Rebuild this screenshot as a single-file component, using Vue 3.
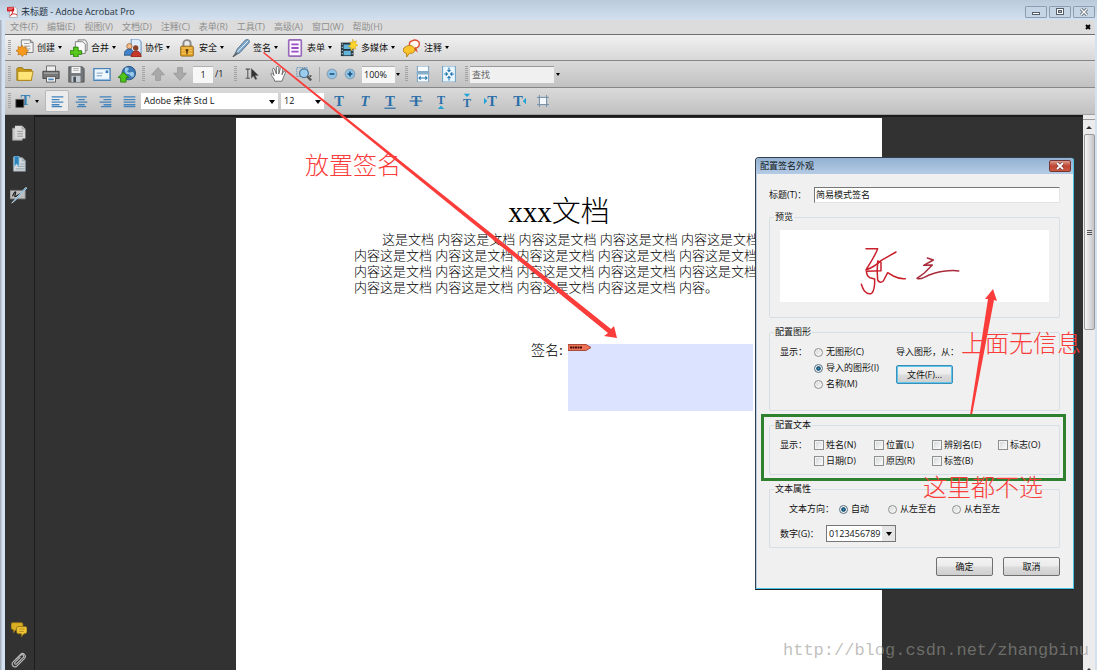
<script setup>
import { h, ref } from 'vue'

const art = {
  pdf: '<path d="M4 1h9l4 4v14H4z" fill="#fff" stroke="#888"/><path d="M0 2h12v7H0z" fill="#d11a22"/><path d="M5 17c4-2 5-8 4-11M6 15c4-3 8-2 11 0" fill="none" stroke="#c22" stroke-width="1.6"/><path d="M2 4h8M2 6h6" stroke="#f6b4b4"/>',
  create: '<path d="M6 1h10l3 3v11H6z" fill="#f4f4f4" stroke="#777"/><path d="M16 1v3h3" fill="#bbb" stroke="#777"/><path d="M9 5h6M9 8h7M9 11h7" stroke="#999"/><path d="M7 7l1.500 2.600L11.400 8.600l-.4 3L14 13l-2.600 1.600 .6 3-3-.6L7 19.500l-1.800-2.500-3 .6.6-3L0 13l2.800-1.500-.6-3 3 .8z" fill="#f59a1c" stroke="#b86608" stroke-width=".7"/>',
  merge: '<path d="M9 1h8l2 3v9H9z" fill="#eee" stroke="#777"/><path d="M6 3h8l3 3v10H6z" fill="#fafafa" stroke="#777"/><path d="M4 9h5v4h4v4H9v3H4v-3H0v-4h4z" fill="#58c91b" stroke="#277f0b"/>',
  collab: '<path d="M8 0h8l3 3v14H8z" fill="#dcecfb" stroke="#5685b5"/><circle cx="6" cy="8" r="3" fill="#f3bd8b" stroke="#864b20" stroke-width=".7"/><path d="M0 18c0-9 11-9 12 0z" fill="#4381c8" stroke="#265280"/><circle cx="13" cy="10" r="3" fill="#8b4328"/><path d="M8 20c0-9 11-9 11 0z" fill="#c73928" stroke="#812018"/>',
  lock: '<path d="M6 9V5c0-5 8-5 8 0v4" fill="none" stroke="#8a8a8a" stroke-width="2.200"/><rect x="3" y="8" width="14" height="11" rx="1" fill="#e4a52c" stroke="#8e5d0d"/><path d="M4 10h12M4 13h12M4 16h12" stroke="#f7cd6c"/><circle cx="10" cy="12.500" r="1.500" fill="#5a3800"/><path d="M10 13v4" stroke="#5a3800" stroke-width="1.500"/>',
  pen: '<path d="M2 19L6 11 15 1c3-1 5 0 4 3L9 15z" fill="#7fa9cc" stroke="#4d6b86"/><path d="M3 18l6-7L18 2" stroke="#e8f4fc" fill="none"/><path d="M1 20l5-5" stroke="#555" stroke-width="1.200"/>',
  form: '<rect x="3" y="1" width="14" height="18" rx="1" fill="#fbf6ff" stroke="#9a68b8" stroke-width="1.800"/><path d="M6 6h8M6 10h8M6 14h8" stroke="#9b51c2" stroke-width="2"/>',
  media: '<path d="M1 4h14v15H1z" fill="#26343e"/><path d="M4 6h8v5H4zM4 13h8v5H4z" fill="#63b5dc"/><path d="M2.500 5v14M13.500 5v14" stroke="#d9e7ed" stroke-dasharray="1.500 2"/><path d="M14 0l1.300 3 3-1-1 3L20 7l-3 1.400.8 3-3-1L12 13v-3.500L9 8l3-1.600L11 3l3 1z" fill="#ffd42d" stroke="#c99c09" stroke-width=".5"/>',
  comment: '<path d="M10 2c4-2 9 0 8 4 0 3-3 4-4 4l1 3-4-3c-5-1-5-7-1-8z" fill="#fff6ee" stroke="#db4b31" stroke-width="1.500"/><path d="M4 8c4-2 10 0 9 5-1 3-4 3-6 3l-3 4v-4c-5-1-5-6 0-8z" fill="#fcc52d" stroke="#b67c0b"/>',
  folder: '<path d="M1 4l1-1h5l2 2h8v12H1z" fill="#c99b17" stroke="#93700c"/><path d="M2 7h17l-2 10H2z" fill="#ffe477" stroke="#b08714"/>',
  print: '<path d="M5 1h10v7H5z" fill="#eee" stroke="#666"/><path d="M1 7h18v8H1z" fill="#777" stroke="#444"/><path d="M2 9h16" stroke="#bcbcbc"/><path d="M5 13h10v6H5z" fill="#f5f5f5" stroke="#555"/><path d="M7 16h6" stroke="#4d88bb" stroke-width="2"/>',
  save: '<path d="M2 2h15l2 2v15H2z" fill="#707579" stroke="#555"/><path d="M5 2h10v7H5z" fill="#f4f4f4"/><path d="M7 4h6M7 6h6" stroke="#aaa"/><path d="M5 12h10v7H5z" fill="#c3cbd0"/><path d="M7 13h3v6H7z" fill="#46515b"/>',
  mail: '<path d="M1 4h18v13H1z" fill="#eff7ff" stroke="#4b83b4" stroke-width="1.500"/><path d="M4 9h7M4 12h6" stroke="#7899b6"/><path d="M14 6h3v3h-3z" fill="#3d7fbc"/><path d="M1 16h18" stroke="#8fb8dc"/>',
  globe: '<circle cx="12" cy="9" r="7.500" fill="#3c79b5" stroke="#24517f"/><path d="M8 3c4-1 5 2 3 3s0 3 3 2 5 1 3 5c-3 1-3-3-6-3S7 7 8 3z" fill="#9bcae8"/><path d="M0 14L6 8l6 6H9v5H3v-5z" fill="#52c51b" stroke="#267c09"/>',
  up: '<path d="M10 2l8 9h-5v7H7v-7H2z" fill="#a9a9a9" stroke="#979797"/>',
  down: '<path d="M10 18l8-9h-5V2H7v7H2z" fill="#a9a9a9" stroke="#979797"/>',
  pick: '<path d="M1 3h6M4 3v13M1 16h6" stroke="#555" stroke-width="1.500" fill="none"/><path d="M9 2v14l3-3 3 5 2-1-2.500-5H19z" fill="#333" stroke="#666" stroke-width=".7"/>',
  hand: '<path d="M6 19C5 15 2 13 1 10c1-2 3 0 4 2L3 4c1-2 3-1 3 1l2 5V2c0-2 3-2 3 0v8l2-7c1-2 3-1 3 1l-1 7 2-4c2-1 3 0 2 2l-3 7-1 3z" fill="#fff" stroke="#555"/>',
  marquee: '<rect x="1" y="2" width="13" height="11" fill="none" stroke="#4989bb" stroke-dasharray="2 1"/><circle cx="10" cy="9" r="5.500" fill="#9bcbed" stroke="#477394" stroke-width="1.500"/><path d="M14 13l5 5" stroke="#555" stroke-width="3"/><path d="M16 12h4l-2 2z" fill="#333"/>',
  minus: '<circle cx="10" cy="10" r="8" fill="#8fc4e8" stroke="#8ba3b6" stroke-width="2"/><path d="M6 10h8" stroke="#14507d" stroke-width="2.600"/>',
  plus: '<circle cx="10" cy="10" r="8" fill="#8fc4e8" stroke="#8ba3b6" stroke-width="2"/><path d="M6 10h8M10 6v8" stroke="#14507d" stroke-width="2.600"/>',
  fitw: '<path d="M3 0h14v7H3zM3 10h14v10H3z" fill="#f8fcff" stroke="#5b91b9"/><path d="M2 8.500h16" stroke="#82adca" stroke-width="2"/><path d="M5 15h10M7 13l-2 2 2 2M13 13l2 2-2 2" fill="none" stroke="#2579b4" stroke-width="1.400"/>',
  fitp: '<path d="M2 0h16v20H2z" fill="#eaf6ff" stroke="#4e8ebb"/><path d="M10 2v5M8 5l2 2 2-2M10 18v-5M8 15l2-2 2 2M4 10h4M6 8l2 2-2 2M16 10h-4M14 8l-2 2 2 2" fill="none" stroke="#1c70aa" stroke-width="1.300"/>',
  fore: '<text x="7" y="15" font-family="Liberation Serif, serif" font-weight="bold" font-size="18" fill="#3980b4">T</text><path d="M1 8h10v10H1z" fill="#050505" stroke="#666"/>',
  left: '<path d="M1 3h18M1 7h12M1 11h18M1 15h12M1 18h16" stroke="#4384bd" stroke-width="2"/>',
  center: '<path d="M2 3h16M5 7h10M1 11h18M5 15h10M3 18h14" stroke="#4384bd" stroke-width="2"/>',
  right: '<path d="M1 3h18M7 7h12M1 11h18M7 15h12M3 18h16" stroke="#4384bd" stroke-width="2"/>',
  full: '<path d="M1 3h18M1 7h18M1 11h18M1 15h18M1 18h18" stroke="#4384bd" stroke-width="2"/>',
  pages: '<path d="M2 4h9l3 3v12H2z" fill="#c9c9c9" stroke="#999"/><path d="M5 1h9l4 4v12H5z" fill="#d9d9d9"/><path d="M14 1v4h4M8 8h7M8 11h7M8 14h7" fill="none" stroke="#888"/>',
  marks: '<path d="M3 2h11l4 4v13H3z" fill="#d3d9dc" stroke="#87939b"/><path d="M14 2v4h4M12 10h5M8 13h9M6 16h11" fill="none" stroke="#8899a5"/><path d="M4 0h6v13l-3-3-3 3z" fill="#2d83ba" stroke="#8bc5e5"/>',
  signs: '<path d="M0 4h18v10H0z" fill="#bdbdbd" stroke="#777"/><path d="M3 11c2-6 5-7 3-2s4 0 6-1" fill="none" stroke="#222" stroke-width="1.500"/><path d="M2 19L18 1l2 0L7 15z" fill="#3f8ebb" stroke="#c2d9e8"/>',
  talk: '<path d="M2 2h11q2 0 2 2v5q0 2-2 2H6l-3 4v-4q-3 0-3-3V4q0-2 2-2z" fill="#d9ad24" stroke="#806411"/><path d="M9 7h9q2 0 2 2v4q0 3-3 3h-1l-3 4v-4H9q-2 0-2-3V9q0-2 2-2z" fill="#f0c638" stroke="#826613"/><path d="M10 10h7M10 13h6" stroke="#aa8214"/>',
  clip: '<path d="M3 12L12 3c3-3 8 1 5 5L8 17c-4 4-9-1-5-5l9-8c3-2 5 1 3 3l-8 8c-2 1-3-1-2-2l7-7" fill="none" stroke="#bbb" stroke-width="1.400"/>',
}

const Glyph = (props) => h('svg', {
  class: 'glyph', viewBox: '0 0 20 20', width: props.size || 18, height: props.size || 18,
  'aria-hidden': 'true', innerHTML: art[props.name],
})
Glyph.props = ['name', 'size']

const menus = ['文件(F)', '编辑(E)', '视图(V)', '文档(D)', '注释(C)', '表单(R)', '工具(T)', '高级(A)', '窗口(W)', '帮助(H)']
const tasks = [
  ['create', '创建'], ['merge', '合并'], ['collab', '协作'], ['lock', '安全'],
  ['pen', '签名'], ['form', '表单'], ['media', '多媒体'], ['comment', '注释'],
]
const fileTools = [['folder', '打开'], ['print', '打印'], ['save', '保存'], ['mail', '电子邮件'], ['globe', '上载']]
const aligns = [['left', '左对齐'], ['center', '居中'], ['right', '右对齐'], ['full', '两端对齐']]
const textTools = [
  ['粗体', ''], ['斜体', ''], ['下划线', 'M3 19h14'], ['删除线', 'M2 10h16'],
  ['下标', 'M6 20l4-4 4 4z'], ['上标', 'M6 1h8l-4 4z'], ['增加缩进', 'M0 6l4 4-4 4z'], ['减少缩进', 'M20 6l-4 4 4 4z'],
]
const unit = '内容这是文档 '
const lines = ['这是文档 ' + unit.repeat(4), unit.repeat(5), unit.repeat(5), unit.repeat(4) + '内容。']

const checks = ['姓名(N)', '位置(L)', '辨别名(E)', '标志(O)', '日期(D)', '原因(R)', '标签(B)']
const graphics = ['无图形(C)', '导入的图形(I)', '名称(M)']
const directions = ['自动', '从左至右', '从右至左']
const graphic = ref(1)
const direction = ref(0)
const picked = ref([])
const sigTitle = ref('简易模式签名')
const page = ref('1')
const zoom = ref('100%')
</script>

<template>
  <div class="window">
    <header class="titlebar">
      <Glyph name="pdf" :size="12" />
      <h1>未标题 - Adobe Acrobat Pro</h1>
      <div class="controls">
        <button aria-label="最小化"><svg width="10" height="8" viewBox="0 0 10 8"><rect x="1.500" y="4.500" width="7" height="2" fill="#fff" stroke="#555f6b" /></svg></button>
        <button aria-label="还原"><svg width="10" height="8" viewBox="0 0 10 8"><rect x="1.500" y=".5" width="7" height="6" fill="#fff" stroke="#555f6b" /><rect x="3.500" y="2.500" width="3" height="2" fill="#aebac6" stroke="#555f6b" /></svg></button>
        <button aria-label="关闭"><svg width="10" height="8" viewBox="0 0 10 8"><path d="M2 1l6 6M8 1L2 7" stroke="#555f6b" stroke-width="3" /><path d="M2 1l6 6M8 1L2 7" stroke="#fff" stroke-width="1.400" /></svg></button>
      </div>
    </header>

    <div class="shell">
      <nav class="menubar">
        <button v-for="m in menus" :key="m">{{ m }}</button>
        <button class="doc-close" aria-label="关闭文档"><svg width="6" height="6" viewBox="0 0 6 6"><path d="M1 1l4 4M5 1L1 5" stroke="#000" stroke-width="2" /></svg></button>
      </nav>

      <div class="toolbar tasks">
        <i class="grip"></i>
        <button v-for="[icon, label] in tasks" :key="label" class="task">
          <Glyph :name="icon" /><span>{{ label }}</span><i class="caret"></i>
        </button>
      </div>

      <div class="toolbar shade">
        <i class="grip"></i>
        <div class="slots files">
          <button v-for="[icon, label] in fileTools" :key="icon" class="slot" :aria-label="label"><Glyph :name="icon" /></button>
        </div>
        <i class="grip"></i>
        <button class="slot narrow" aria-label="上一页"><Glyph name="up" :size="16" /></button>
        <button class="slot narrow" aria-label="下一页"><Glyph name="down" :size="16" /></button>
        <input v-model="page" class="page-no" aria-label="页码">
        <span class="total">/1</span>
        <i class="grip"></i>
        <button class="slot" aria-label="选择工具"><Glyph name="pick" :size="14" /></button>
        <button class="slot" aria-label="手形工具"><Glyph name="hand" :size="16" /></button>
        <button class="slot" aria-label="选框缩放"><Glyph name="marquee" :size="16" /></button>
        <i class="rule"></i>
        <button class="slot tiny" aria-label="缩小"><Glyph name="minus" :size="12" /></button>
        <button class="slot tiny" aria-label="放大"><Glyph name="plus" :size="12" /></button>
        <input v-model="zoom" class="zoom" aria-label="缩放比例">
        <i class="caret"></i>
        <i class="grip wide"></i>
        <button class="slot" aria-label="适合宽度"><Glyph name="fitw" :size="16" /></button>
        <button class="slot" aria-label="适合页面"><Glyph name="fitp" :size="16" /></button>
        <i class="grip"></i>
        <input class="search" placeholder="查找" aria-label="查找">
        <i class="caret"></i>
      </div>

      <div class="toolbar shade last">
        <i class="grip"></i>
        <button class="task color" aria-label="文本颜色"><Glyph name="fore" :size="16" /><i class="caret"></i></button>
        <button v-for="([icon, label], i) in aligns" :key="icon" class="slot align" :class="{ on: i === 0 }" :aria-label="label"><Glyph :name="icon" :size="13" /></button>
        <div class="pick font"><select aria-label="字体"><option>Adobe 宋体 Std L</option></select></div>
        <div class="pick size"><select aria-label="字号"><option>12</option></select></div>
        <div class="slots texts">
          <button v-for="([label, mark], i) in textTools" :key="label" class="slot" :aria-label="label">
            <svg class="letter" width="16" height="16" viewBox="0 0 20 20">
              <text x="10" :y="i === 5 ? 18 : i === 4 ? 14 : 16" text-anchor="middle" class="tee" :class="{ slant: i === 1, small: i === 4 || i === 5 }">T</text>
              <path :d="mark" :class="i < 4 ? 'bar' : 'tick'" />
            </svg>
          </button>
          <button class="slot" aria-label="裁剪">
            <svg width="12" height="12" viewBox="0 0 20 20"><path d="M4 0v20M16 0v20M0 4h20M0 16h20" stroke="#6b8aa5" stroke-width="1.500" /><path d="M5 5h10v10H5z" fill="#f3f9ff" /></svg>
          </button>
        </div>
      </div>

      <main class="work">
        <aside class="rail">
          <button aria-label="页面"><Glyph name="pages" :size="16" /></button>
          <button aria-label="书签"><Glyph name="marks" :size="16" /></button>
          <button aria-label="签名"><Glyph name="signs" :size="17" /></button>
          <button class="low" aria-label="注释"><Glyph name="talk" :size="16" /></button>
          <button aria-label="附件"><Glyph name="clip" :size="16" /></button>
        </aside>
        <section class="canvas">
          <article class="paper">
            <h2>xxx文档</h2>
            <p class="body"><span v-for="(line, i) in lines" :key="i">{{ line }}</span></p>
            <div class="sign">
              <span>签名:</span>
              <div class="field">
                <svg width="24" height="7" viewBox="0 0 24 7"><path d="M0 .5h18l5 3-5 3H0z" fill="#ee7156" stroke="#a94c38" /><path d="M2 3.500h12" stroke="#45100b" stroke-width="2" stroke-dasharray="2 .5" /></svg>
              </div>
            </div>
          </article>
        </section>
        <div class="scroll" aria-hidden="true">
          <i class="split"></i>
          <i class="arrow"></i>
          <div class="thumb"><i></i><i></i><i></i></div>
          <i class="arrow flip"></i>
        </div>
      </main>
    </div>

    <form class="dialog" role="dialog" aria-label="配置签名外观" @submit.prevent>
      <header>
        <h3>配置签名外观</h3>
        <button type="button" aria-label="关闭"><svg width="8" height="8" viewBox="0 0 8 8"><path d="M1 1l6 6M7 1L1 7" stroke="#5b2b2b" stroke-width="3" /><path d="M1 1l6 6M7 1L1 7" stroke="#fff" stroke-width="1.800" /></svg></button>
      </header>
      <div class="content">
        <div class="name-row">
          <label for="sig-title">标题(T)：</label>
          <input id="sig-title" v-model="sigTitle">
        </div>

        <fieldset class="preview">
          <legend>预览</legend>
          <div class="picture">
            <svg viewBox="0 0 810 216" width="270" height="72" fill="none" stroke="#c9202c" stroke-width="4.500" stroke-linejoin="round" stroke-linecap="round">
              <path d="M258 56Q280 57 293 56Q291 64 276 90L258 120Q284 110 304 91L348 66" />
              <path d="M293 93L303 97L303 122L259 124Q261 140 270 143L284 147Q285 180 275 190Q264 195 254 184Q248 176 244 163" />
              <path d="M293 95Q290 125 293 150Q300 162 310 153L323 128L340 138Q360 148 376 146" />
              <path d="M442 84L460 90L431 106L457 105Q442 120 433 129L411 145Q418 149 431 143Q465 126 490 124Q520 119 536 123" stroke="#a92b3b" />
            </svg>
          </div>
        </fieldset>

        <fieldset class="graphic">
          <legend>配置图形</legend>
          <span>显示：</span>
          <div class="stack">
            <label v-for="(g, i) in graphics" :key="g"><input v-model="graphic" type="radio" name="graphic" :value="i">{{ g }}</label>
          </div>
          <div class="import">
            <span>导入图形，从：</span>
            <button type="button" class="btn focus">文件(F)...</button>
          </div>
        </fieldset>

        <fieldset class="texts-set">
          <legend>配置文本</legend>
          <span class="lead">显示：</span>
          <label v-for="c in checks" :key="c"><input v-model="picked" type="checkbox" :value="c">{{ c }}</label>
        </fieldset>

        <fieldset class="props">
          <legend>文本属性</legend>
          <div class="dir">
            <span>文本方向：</span>
            <label v-for="(d, i) in directions" :key="d"><input v-model="direction" type="radio" name="direction" :value="i">{{ d }}</label>
          </div>
          <div class="digits">
            <label for="digits">数字(G)：</label>
            <div class="pick boxed"><select id="digits"><option>0123456789</option></select></div>
          </div>
        </fieldset>

        <footer>
          <button type="submit" class="btn">确定</button>
          <button type="button" class="btn">取消</button>
        </footer>
      </div>
    </form>

    <div class="notes">
      <svg width="1097" height="670" viewBox="0 0 1097 670" fill="#fa3c3a">
        <path d="M264 52L611 329L614 326L617 338L604 336L608 333L263 53Z" />
        <path d="M970 415L988 299L985 299L993 289L997 301L994 300L972 415Z" />
        <rect x="762.500" y="415.500" width="302" height="64" fill="none" stroke="#2f812f" stroke-width="3" />
      </svg>
      <span class="note place">放置签名</span>
      <span class="note above">上面无信息</span>
      <span class="note none">这里都不选</span>
      <span class="mark">http://blog.csdn.net/zhangbinu</span>
    </div>
  </div>
</template>

<style>
html, body { margin: 0; overflow: hidden; }
</style>

<style scoped>
.window {
  position: relative;
  display: flex;
  flex-direction: column;
  height: 100vh;
  overflow: hidden;
  background: linear-gradient(90deg, #a9b2bc 0, #a9b2bc 1px, #d3e1f0 2px);
  font-family: "Open Sans", "Noto Sans", "Noto Sans CJK SC", sans-serif;
  font-size: 9px;
  line-height: 12px;
  color: #111;
}
button, input, select { font: inherit; color: inherit; margin: 0; padding: 0; border: 0; border-radius: 0; background: none; }
input, select { appearance: none; outline: none; box-sizing: border-box; }
h1, h2, h3, p { margin: 0; font-weight: inherit; }
.window :deep(.glyph) { flex: none; display: block; }

.titlebar { flex: none; display: flex; align-items: center; gap: 2px; height: 20px; padding: 0 2px 0 7px; background: linear-gradient(#bacada, #d2e0ef); }
.titlebar h1 { flex: 1; padding-top: 3px; font-size: 9px; color: #22303d; }
.titlebar .glyph { margin-top: 3px; }
.controls { display: flex; gap: 2px; padding-top: 3px; }
.controls button { display: flex; align-items: center; justify-content: center; width: 22px; height: 12px; box-sizing: border-box; border: 1px solid #8b9db3; border-radius: 1px; background: #c6d5e5; }

.shell { flex: 1; min-height: 0; display: flex; flex-direction: column; margin: 0 2px 0 5px; }
.menubar { flex: none; display: flex; align-items: center; height: 14px; padding: 0 0 0 5px; background: #dcdcdc; color: #8f8f8f; border-bottom: 1px solid #6f6f6f; }
.menubar button { padding: 0 9px 1px 0; }
.menubar .doc-close { margin-left: auto; padding: 0 4px 0 0; }
.toolbar { flex: none; display: flex; align-items: center; height: 25px; border-bottom: 1px solid #868686; background: linear-gradient(#f1f1f1, #d8d8d8); }
.toolbar.shade { height: 26px; background: linear-gradient(#dadada, #c1c1c1); }
.toolbar.last { border-bottom-color: #a0a0a0; }
.grip { flex: none; width: 3px; height: 16px; margin: 0 2px 0 3px; background: repeating-linear-gradient(#a2a2a2 0, #a2a2a2 1px, transparent 1px, transparent 2px); }
.grip.wide { margin-left: 5px; }
.caret { flex: none; width: 0; height: 0; border: solid transparent; border-width: 3px 2px 0; border-top-color: #000; }
.tasks { gap: 7px; }
.tasks .grip { margin-right: -2px; }
.task { display: flex; align-items: center; gap: 3px; width: auto; }
.slots { display: flex; justify-content: space-between; }
.slot { flex: none; display: flex; align-items: center; justify-content: center; width: 26px; height: 22px; }
.task .caret { margin-right: 1px; }
.files { width: 126px; }
.files .slot { width: 24px; }
.narrow { width: 22px; }
.tiny { width: 18px; }
.page-no, .zoom, .search { height: 17px; background: #f7f7f7; border-top: 1px solid #b0b0b0; }
.page-no { width: 20px; margin: 0 2px; text-align: center; }
.total { width: 16px; }
.rule { width: 1px; height: 15px; margin: 0 3px 0 2px; background: #a5a5a5; }
.zoom { width: 33px; margin: 0 1px 0 3px; padding-left: 2px; }
.search { width: 84px; margin-right: 2px; padding-left: 2px; background: #f0f0f0; border-top-color: #999; }
.search::placeholder { color: #666; opacity: 1; }
.color { width: 30px; gap: 4px; }
.grip + .color { margin-left: 2px; }
.align { width: 24px; }
.align.on { height: 22px; box-sizing: border-box; border: 1px solid #b9b9b9; border-radius: 2px; background: #ececec; }
.pick { position: relative; display: flex; height: 16px; background: #fff; }
.pick select { width: 100%; padding-left: 3px; }
.pick::after { content: ""; position: absolute; right: 3px; top: 7px; border: solid transparent; border-width: 4px 3px 0; border-top-color: #000; pointer-events: none; }
.font { width: 137px; margin-right: 3px; }
.size { width: 43px; margin-right: 4px; }
.texts { width: 226px; }
.texts .slot { width: 22px; }
.letter { overflow: visible; }
.tee { font: bold 18px "Liberation Serif", serif; fill: #2b6ea8; }
.tee.slant { font-style: italic; }
.tee.small { font-size: 15px; }
.bar { stroke: #2b6ea8; stroke-width: 1.500; }
.tick { fill: #1fa2d6; }

.work { flex: 1; min-height: 0; display: flex; background: #323232; }
.rail { flex: none; display: flex; flex-direction: column; gap: 15px; width: 30px; box-sizing: border-box; padding: 10px 2px 2px 0; border-right: 1px solid #1c1c1c; }
.rail button { display: flex; justify-content: center; height: 16px; }
.rail .low { margin-top: auto; }
.canvas { flex: 1; min-width: 0; display: flex; justify-content: center; padding-top: 3px; box-shadow: inset 0 2px 0 #1b1b1d; overflow: hidden; }
.paper { width: 646px; background: #fff; font-family: "Liberation Serif", "Noto Sans CJK SC", serif; font-weight: 300; color: #000; }
.paper h2 { padding-top: 76px; text-align: center; font-size: 29px; line-height: 36px; }
.body { padding: 2px 0 0 118px; font-size: 13px; line-height: 16px; }
.body span { display: block; white-space: nowrap; }
.body span:first-child { padding-left: 28px; }
.sign { display: flex; gap: 5px; margin: 48px 0 0 295px; font-size: 14px; line-height: 14px; }
.field { width: 185px; height: 67px; background: #dbe3ff; }
.field svg { display: block; }
.scroll { flex: none; display: flex; flex-direction: column; align-items: center; width: 12px; background: #ececec; }
.split { width: 12px; height: 5px; box-sizing: border-box; border-bottom: 1px solid #999; }
.arrow { margin: 6px 0 5px; border: solid transparent; border-width: 0 3px 3px; border-bottom-color: #333; }
.flip { margin: auto 0 -1px; }
.thumb { display: flex; flex-direction: column; align-items: center; justify-content: center; gap: 1px; width: 11px; height: 196px; box-sizing: border-box; border: 1px solid #999; border-radius: 2px; background: linear-gradient(90deg, #f5f5f5, #d9d9dc 60%, #c4c4c8); }
.thumb i { width: 5px; height: 1px; background: #555; }

.dialog { position: absolute; top: 157px; right: 23px; width: 319px; box-sizing: border-box; border: 1px solid #33404c; border-right-color: #46c4e6; border-bottom-color: #46c4e6; border-radius: 4px 4px 0 0; background: #f0f0f0; box-shadow: 0 1px 0 #222, inset 1px 0 0 #b7cde4; }
.dialog header { display: flex; align-items: center; justify-content: space-between; height: 16px; padding: 0 2px 0 4px; background: linear-gradient(#92b1d1, #b5cbe5); border-radius: 3px 3px 0 0; }
.dialog h3 { font-size: 9px; color: #101820; }
.dialog header button { display: flex; align-items: center; justify-content: center; width: 22px; height: 12px; box-sizing: border-box; border: 1px solid #743535; border-radius: 2px; background: linear-gradient(#dd9c90, #bf4431 50%, #c95a43); }
.content { padding: 12px 13px; }
.name-row { display: flex; align-items: center; height: 17px; }
.name-row label { width: 45px; }
.name-row input { flex: 1; min-width: 0; height: 16px; padding-left: 1px; border: 1px solid #e3e3e3; border-top-color: #777; border-left-color: #777; background: #fff; }
fieldset { min-width: 0; margin: 8px 0 0; border: 1px solid #d5dfe5; border-radius: 2px; }
.preview { padding: 7px 10px 15px; }
legend { margin-left: -6px; padding: 0 1px; height: 12px; line-height: 12px; }
.picture { height: 72px; overflow: hidden; background: #fff; }
.dialog label, .dialog span { white-space: nowrap; }
fieldset label { display: flex; align-items: center; height: 16px; }
fieldset input { flex: none; width: 10px; height: 10px; margin: 0 2px 0 0; border: 1px solid #8e8f8f; background: linear-gradient(135deg, #cfd2d4, #fff); box-shadow: inset 0 0 0 1px #f4f4f4; }
fieldset input[type="radio"] { width: 9px; height: 9px; margin-right: 3px; border-radius: 50%; }
fieldset input[type="radio"]:checked { border-color: #597387; background: radial-gradient(circle, #2aa0cf 0, #123d5c 35%, #cfe3ef 60%); }
.graphic { display: flex; padding: 6px 10px 18px; line-height: 16px; }
.graphic > span { width: 34px; }
.stack { width: 82px; }
.import { display: flex; flex-direction: column; align-items: flex-start; gap: 5px; }
.import > span { height: 16px; }
.btn { width: 57px; height: 19px; box-sizing: border-box; border: 1px solid #707070; border-radius: 2px; background: linear-gradient(#f3f3f3, #ebebeb 48%, #dcdcdc 52%, #cfcfcf); line-height: 14px; }
.btn.focus { border-color: #3c8fb8; box-shadow: inset 0 0 0 1px #5cc6ea; }
.texts-set { display: grid; grid-template-columns: 34px 60px 58px 66px 1fr; padding: 6px 0 5px 10px; line-height: 16px; }
.texts-set .lead { grid-row: span 2; }
.props { padding: 6px 10px 5px; }
.dir { display: flex; gap: 16px; padding-left: 9px; line-height: 16px; }
.dir span { width: 50px; margin-right: -16px; }
.dir label:nth-of-type(1) { margin-right: 3px; }
.digits { display: flex; align-items: center; margin-top: 8px; }
.digits label { width: 46px; }
.boxed { width: 70px; height: 17px; box-sizing: border-box; border: 1px solid #777; background: linear-gradient(90deg, #fff 55px, #e5e5e5 55px); }
.boxed::after { top: 6px; }
.boxed select { padding-left: 2px; }
footer { display: flex; justify-content: flex-end; gap: 10px; margin-top: 9px; }

.notes { position: absolute; inset: 0; pointer-events: none; }
.notes svg { display: block; }
.note { position: absolute; font: 300 24px/30px "Noto Sans CJK SC", sans-serif; color: #fa3c3a; white-space: nowrap; }
.place { left: 305px; top: 149px; }
.above { left: 961px; top: 327px; }
.none { left: 923px; top: 471px; }
.mark { position: absolute; left: 783px; top: 641px; font: 17px/20px "Liberation Mono", monospace; color: rgba(150, 150, 145, .6); }
</style>
